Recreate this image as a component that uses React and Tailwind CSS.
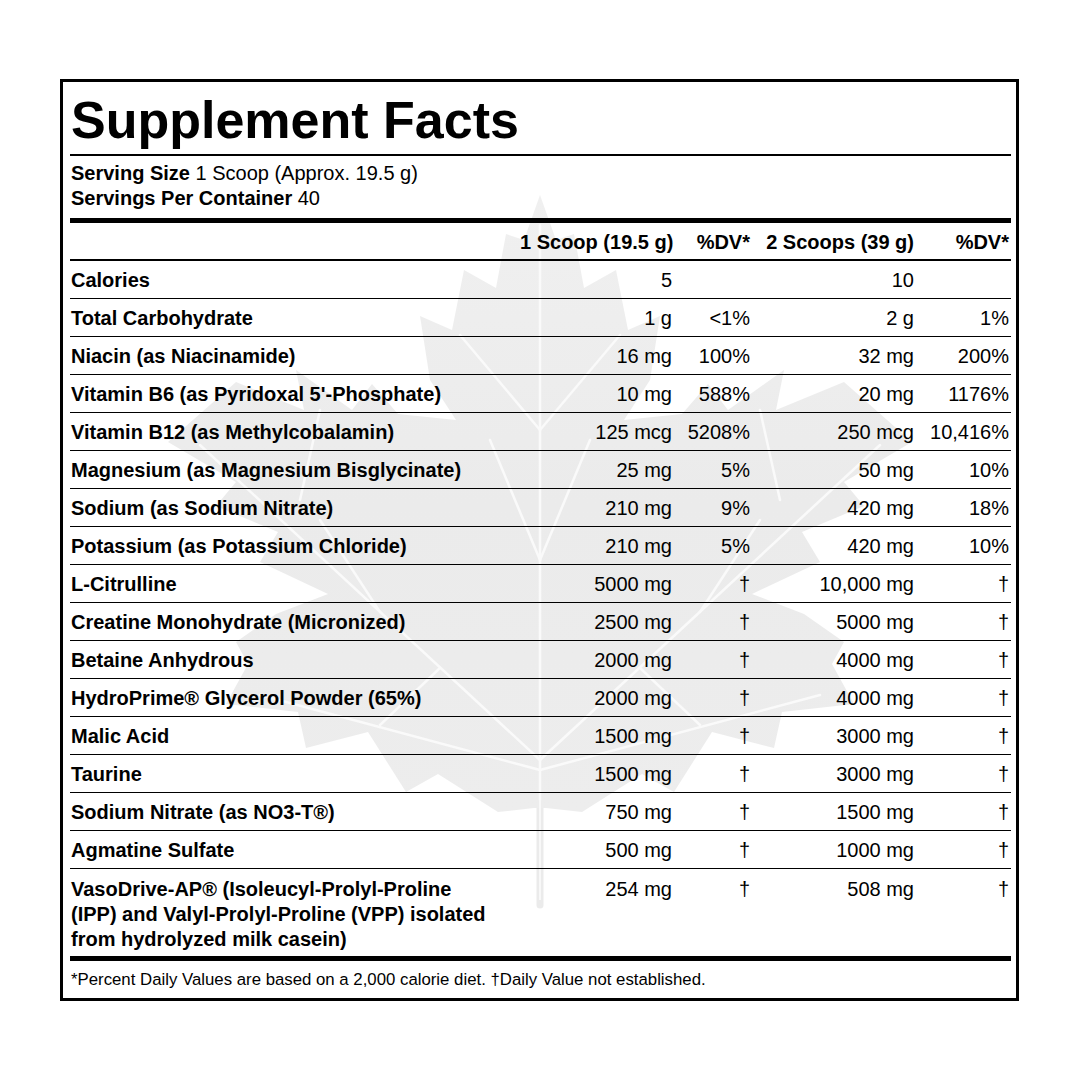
import React from "react";

// Supplement facts panel with a faint maple leaf behind the table

const rows = [
  ["Calories", "5", "", "10", ""],
  ["Total Carbohydrate", "1 g", "<1%", "2 g", "1%"],
  ["Niacin (as Niacinamide)", "16 mg", "100%", "32 mg", "200%"],
  ["Vitamin B6 (as Pyridoxal 5'-Phosphate)", "10 mg", "588%", "20 mg", "1176%"],
  ["Vitamin B12 (as Methylcobalamin)", "125 mcg", "5208%", "250 mcg", "10,416%"],
  ["Magnesium (as Magnesium Bisglycinate)", "25 mg", "5%", "50 mg", "10%"],
  ["Sodium (as Sodium Nitrate)", "210 mg", "9%", "420 mg", "18%"],
  ["Potassium (as Potassium Chloride)", "210 mg", "5%", "420 mg", "10%"],
  ["L-Citrulline", "5000 mg", "†", "10,000 mg", "†"],
  ["Creatine Monohydrate (Micronized)", "2500 mg", "†", "5000 mg", "†"],
  ["Betaine Anhydrous", "2000 mg", "†", "4000 mg", "†"],
  ["HydroPrime® Glycerol Powder (65%)", "2000 mg", "†", "4000 mg", "†"],
  ["Malic Acid", "1500 mg", "†", "3000 mg", "†"],
  ["Taurine", "1500 mg", "†", "3000 mg", "†"],
  ["Sodium Nitrate (as NO3-T®)", "750 mg", "†", "1500 mg", "†"],
  ["Agmatine Sulfate", "500 mg", "†", "1000 mg", "†"],
];

// right half of the leaf outline, x as offset from the midrib (x=540)
const half = [
  [0, 195], [16, 240], [34, 234], [44, 288], [76, 270], [88, 330], [120, 316],
  [110, 380], [84, 420], [142, 414], [168, 384], [188, 410], [244, 370],
  [236, 410], [304, 382], [372, 442], [304, 482], [324, 506], [262, 532],
  [280, 562], [212, 594], [264, 614], [304, 642], [292, 664], [314, 704],
  [242, 712], [234, 748], [172, 732], [134, 792], [102, 774], [42, 812], [6, 808],
];
const leafPoints = [
  ...half.map(([dx, y]) => `${540 + dx},${y}`),
  ...half.slice(1).reverse().map(([dx, y]) => `${540 - dx},${y}`),
].join(" ");

function MapleLeaf() {
  return (
    <svg
      className="absolute inset-0 w-full h-full pointer-events-none"
      viewBox="63 82 953 916"
      preserveAspectRatio="none"
    >
      <defs>
        <linearGradient id="leafShade" x1="0" y1="0" x2="0" y2="1">
          <stop offset="0" stopColor="#f0f0f0" />
          <stop offset="0.5" stopColor="#ebebeb" />
          <stop offset="1" stopColor="#ededed" />
        </linearGradient>
      </defs>
      <line x1="540" y1="780" x2="540" y2="905" stroke="#ebebeb" strokeWidth="7" strokeLinecap="round" />
      <polygon points={leafPoints} fill="url(#leafShade)" />
      <g stroke="#fafafa" strokeWidth="2.5" strokeLinecap="round" fill="none">
        <line x1="540" y1="800" x2="540" y2="225" />
        <line x1="540" y1="760" x2="880" y2="445" />
        <line x1="540" y1="760" x2="200" y2="445" />
        <line x1="540" y1="770" x2="820" y2="695" />
        <line x1="540" y1="770" x2="260" y2="695" />
        <line x1="540" y1="430" x2="620" y2="335" />
        <line x1="540" y1="430" x2="460" y2="335" />
        <line x1="540" y1="560" x2="590" y2="440" />
        <line x1="540" y1="560" x2="490" y2="440" />
        <line x1="700" y1="612" x2="760" y2="520" />
        <line x1="380" y1="612" x2="320" y2="520" />
        <line x1="640" y1="668" x2="700" y2="725" />
        <line x1="440" y1="668" x2="380" y2="725" />
        <line x1="780" y1="500" x2="760" y2="410" />
        <line x1="300" y1="500" x2="320" y2="410" />
      </g>
      <line x1="540" y1="800" x2="540" y2="900" stroke="#f8f8f8" strokeWidth="2" />
    </svg>
  );
}

const grid = "grid grid-cols-[450px_152px_78px_164px_95px] pr-[2px]";

export default function App() {
  return (
    <div className="w-[1080px] h-[1080px] bg-white pt-[79px] pl-[60px] text-black font-['Liberation_Sans',Arial,sans-serif]">
      <div className="relative w-[959px] h-[922px] border-[3px] border-black">
        <MapleLeaf />
        <div className="relative pl-[7px] pr-[5px]">
          <h1 className="pt-[12px] pl-px text-[52px] leading-none font-bold">Supplement Facts</h1>
          <div className="mt-[8px] h-[2px] bg-black" />
          <div className="pt-[5px] text-[20px] leading-[25px] pl-px">
            <div><span className="font-bold">Serving Size</span> 1 Scoop (Approx. 19.5 g)</div>
            <div><span className="font-bold">Servings Per Container</span> 40</div>
          </div>
          <div className="mt-[7px] h-[5px] bg-black" />

          <div className={`${grid} h-[38px] pt-[2px] items-center border-b-2 border-black text-[20px] leading-[25px] font-bold whitespace-nowrap`}>
            <div />
            <div className="text-right">1 Scoop (19.5 g)</div>
            <div className="text-right">%DV*</div>
            <div className="text-right">2 Scoops (39 g)</div>
            <div className="text-right">%DV*</div>
          </div>

          {rows.map((r) => (
            <div
              key={r[0]}
              className={`${grid} h-[38px] pt-[2px] items-center border-b border-black text-[20px] leading-[25px] whitespace-nowrap`}
            >
              <div className="font-bold pl-px">{r[0]}</div>
              <div className="text-right">{r[1]}</div>
              <div className="text-right">{r[2]}</div>
              <div className="text-right">{r[3]}</div>
              <div className="text-right">{r[4]}</div>
            </div>
          ))}

          <div className={`${grid} pt-[8px] pb-[4px] text-[20px] leading-[25px] whitespace-nowrap`}>
            <div className="font-bold pl-px">
              <div>VasoDrive-AP® (Isoleucyl-Prolyl-Proline</div>
              <div>(IPP) and Valyl-Prolyl-Proline (VPP) isolated</div>
              <div>from hydrolyzed milk casein)</div>
            </div>
            <div className="text-right">254 mg</div>
            <div className="text-right">†</div>
            <div className="text-right">508 mg</div>
            <div className="text-right">†</div>
          </div>
          <div className="h-[5px] bg-black" />

          <div className="h-[35px] pt-[3px] flex items-center pl-px text-[16.8px]">
            *Percent Daily Values are based on a 2,000 calorie diet. †Daily Value not established.
          </div>
        </div>
      </div>
    </div>
  );
}
